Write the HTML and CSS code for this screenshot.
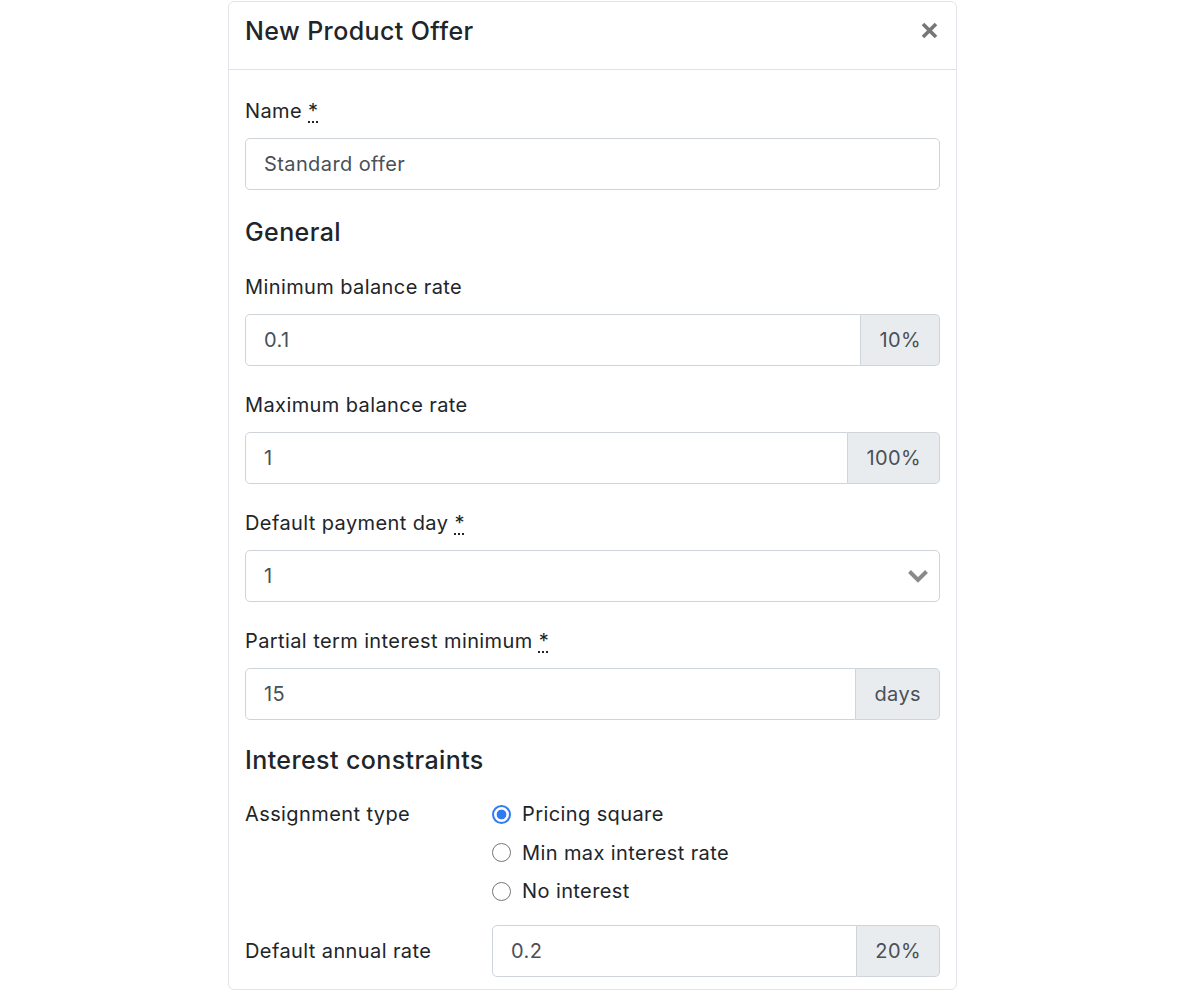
FILE: index.html
```html
<!DOCTYPE html>
<html lang="en">
<head>
<meta charset="utf-8">
<title>New Product Offer</title>
<link rel="stylesheet" href="styles.css">
</head>
<body>
<div class="modal">
  <div class="modal-header">
    <h5 class="modal-title">New Product Offer</h5>
    <button class="close" type="button" aria-label="Close">
      <svg width="17" height="17" viewBox="0 0 17 17"><path d="M2 2 L15 15 M15 2 L2 15" stroke="#777" stroke-width="3.6" stroke-linecap="butt"/></svg>
    </button>
  </div>
  <div class="modal-body">
    <div class="group">
      <label class="label label-first">Name <abbr title="required">*</abbr></label>
      <div class="field"><span class="value">Standard offer</span></div>
    </div>

    <h5 class="section">General</h5>

    <div class="group">
      <label class="label">Minimum balance rate</label>
      <div class="input-group">
        <div class="field joined"><span class="value">0.1</span></div>
        <div class="addon">10%</div>
      </div>
    </div>

    <div class="group">
      <label class="label">Maximum balance rate</label>
      <div class="input-group">
        <div class="field joined"><span class="value">1</span></div>
        <div class="addon">100%</div>
      </div>
    </div>

    <div class="group">
      <label class="label">Default payment day <abbr title="required">*</abbr></label>
      <div class="field select"><span class="value">1</span>
        <svg class="chevron" width="22" height="14" viewBox="0 0 22 14"><path d="M2.5 2.5 L11 11 L19.5 2.5" fill="none" stroke="#8a8a8a" stroke-width="4"/></svg>
      </div>
    </div>

    <div class="group">
      <label class="label">Partial term interest minimum <abbr title="required">*</abbr></label>
      <div class="input-group">
        <div class="field joined"><span class="value">15</span></div>
        <div class="addon">days</div>
      </div>
    </div>

    <h5 class="section section-tight">Interest constraints</h5>

    <div class="row radio-row">
      <div class="row-label">Assignment type</div>
      <div class="radios">
        <div class="radio"><span class="dot checked"></span><span>Pricing square</span></div>
        <div class="radio"><span class="dot"></span><span>Min max interest rate</span></div>
        <div class="radio"><span class="dot"></span><span>No interest</span></div>
      </div>
    </div>

    <div class="row">
      <div class="row-label">Default annual rate</div>
      <div class="input-group">
        <div class="field joined"><span class="value">0.2</span></div>
        <div class="addon">20%</div>
      </div>
    </div>
  </div>
</div>
</body>
</html>
```

FILE: styles.css
```css
* { box-sizing: border-box; }

body {
  margin: 0;
  background: #ffffff;
  font-family: "Inter", "Liberation Sans", sans-serif;
  font-size: 20px;
  line-height: 30px;
  letter-spacing: 0.4px;
  color: #212529;
}

.modal {
  width: 729px;
  margin: 1px 0 0 228px;
  border: 1px solid #e1e4e8;
  border-radius: 6px;
  background: #fff;
}

.modal-header {
  display: flex;
  align-items: flex-start;
  justify-content: space-between;
  padding: 10px 16px 19px;
  border-bottom: 1px solid #dee2e6;
}

.modal-title {
  margin: 0;
  font-size: 25px;
  font-weight: 500;
  line-height: 38px;
  color: #212529;
}

.close {
  border: 0;
  background: none;
  padding: 0;
  margin: 10px 2px 0 0;
  width: 17px;
  height: 17px;
  display: flex;
}

.modal-body {
  padding: 26px 16px 12px;
}

.group {
  margin-bottom: 24px;
}

.label {
  display: block;
  margin-bottom: 12px;
}

.label-first {
  margin-bottom: 12px;
}

abbr {
  text-decoration: underline dotted;
  text-underline-offset: 3px;
  cursor: help;
}

.field {
  display: flex;
  align-items: center;
  height: 52px;
  padding: 0 18px;
  border: 1px solid #ced4da;
  border-radius: 5px;
  color: #495057;
  background: #fff;
}

.select {
  justify-content: space-between;
  padding-right: 10px;
}

.chevron {
  display: block;
}

.input-group {
  display: flex;
  height: 52px;
}

.joined {
  flex: 1;
  border-top-right-radius: 0;
  border-bottom-right-radius: 0;
}

.addon {
  display: flex;
  align-items: center;
  padding: 0 18px;
  background: #e9ecef;
  border: 1px solid #ced4da;
  border-left: 0;
  border-radius: 0 5px 5px 0;
  color: #495057;
}

.section {
  margin: 0 0 22px;
  font-size: 25px;
  font-weight: 500;
  line-height: 36px;
}

.section-tight {
  margin-top: -2px;
  margin-bottom: 21px;
}

.row {
  display: grid;
  grid-template-columns: 247px 1fr;
  align-items: center;
}

.radio-row {
  align-items: start;
  margin-bottom: 19px;
}

.radios {
  display: flex;
  flex-direction: column;
  gap: 8.5px;
}

.radio {
  display: flex;
  align-items: center;
  gap: 11px;
}

.dot {
  width: 19px;
  height: 19px;
  border-radius: 50%;
  border: 1px solid #767676;
  background: #fff;
}

.dot.checked {
  border: 2px solid #2f7bf6;
  background: radial-gradient(circle, #2f7bf6 0 4.6px, #fff 5.2px);
}
```
